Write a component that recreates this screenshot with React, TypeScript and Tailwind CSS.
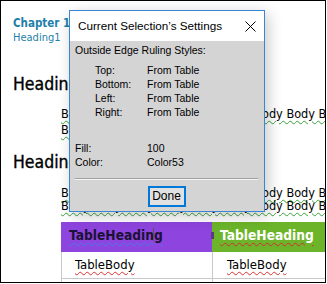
import React from "react";

const docFont = { fontFamily: '"DejaVu Sans Condensed", "DejaVu Sans", "Liberation Sans", sans-serif' };
const dlgFont = { fontFamily: '"Liberation Sans", Arial, sans-serif' };

const bodyLine =
  "Body Body Body Body Body Body Body Body Body Body Body Body";

export default function App() {
  return (
    <div
      className="relative w-[326px] h-[283px] border border-black bg-white overflow-hidden text-black"
      style={docFont}
    >
      {/* Document flow */}
      <div className="pl-[12px] pt-[15px]">
        <div className="text-[11.5px] leading-[15px] font-bold text-[#1f7fab] whitespace-nowrap">
          Chapter 1 Introduction
        </div>
        <div className="text-[11px] leading-[13px] text-[#1f7fab] whitespace-nowrap">Heading1</div>
        <div className="mt-[30px] text-[17.5px] leading-[20px] whitespace-nowrap [-webkit-text-stroke:0.35px_#000]">
          Heading 2
        </div>
      </div>

      <div className="pl-[60px] mt-[12px] text-[12.6px] leading-[16px] whitespace-nowrap">
        <div>
          <span className="underline decoration-wavy decoration-[#3aa03a] decoration-1 underline-offset-2">
            {bodyLine}
          </span>
        </div>
        <div>
          <span className="underline decoration-wavy decoration-[#3aa03a] decoration-1 underline-offset-2">
            Body Body Body
          </span>
        </div>
      </div>

      <div className="pl-[12px] mt-[14px] text-[17.5px] leading-[20px] whitespace-nowrap [-webkit-text-stroke:0.35px_#000]">
        Heading 2
      </div>

      <div className="pl-[60px] mt-[14px] text-[12.6px] leading-[13px] whitespace-nowrap">
        <div>
          <span className="underline decoration-wavy decoration-[#3aa03a] decoration-1 underline-offset-2">
            {bodyLine}
          </span>
        </div>
        <div>
          <span className="underline decoration-wavy decoration-[#3aa03a] decoration-1 underline-offset-2">
            {bodyLine}
          </span>
        </div>
      </div>

      {/* Table */}
      <div className="pl-[60px] mt-[10px]">
        <div className="grid grid-cols-[151px_151px] w-[302px]">
          <div className="relative h-[30px] bg-[#8e44de] pl-[8px] pt-[5px] text-[13.7px] leading-[16px] font-bold text-[#1c1236] whitespace-nowrap">
            <span className="underline decoration-wavy decoration-[#4a78e8] decoration-1 underline-offset-2">
              TableHeading
            </span>
            <span className="absolute left-[92px] top-[6px] w-[1px] h-[13px] bg-[#555]" />
            <span className="absolute right-[-2px] top-[10px] w-[3px] h-[7px] bg-[#5a3a80]" />
          </div>
          <div className="h-[30px] bg-[#6cb52a] pl-[8px] pt-[5px] text-[13.7px] leading-[16px] font-bold text-white whitespace-nowrap">
            <span className="underline decoration-wavy decoration-[#d03030] decoration-1 underline-offset-2">
              TableHeading
            </span>
          </div>
          <div className="h-[27px] border-l border-b border-[#c8c8c8] pl-[13px] pt-[5px] text-[13px] leading-[15px] whitespace-nowrap">
            <span className="underline decoration-wavy decoration-[#e03030] decoration-1 underline-offset-2">
              TableBody
            </span>
          </div>
          <div className="h-[27px] border-l border-b border-[#c8c8c8] pl-[14px] pt-[5px] text-[13px] leading-[15px] whitespace-nowrap">
            <span className="underline decoration-wavy decoration-[#e03030] decoration-1 underline-offset-2">
              TableBody
            </span>
          </div>
          <div className="h-[27px] border-l border-[#c8c8c8]" />
          <div className="h-[27px] border-l border-[#c8c8c8]" />
        </div>
      </div>

      {/* Dialog */}
      <div
        className="absolute left-[68px] top-[9px] w-[196px] h-[202px] border border-[#3a86d4] flex flex-col shadow-[3px_4px_14px_rgba(0,0,0,0.22)]"
        style={dlgFont}
      >
        <div className="h-[30px] bg-white flex items-center justify-between pl-[8px] pr-[8px]">
          <span className="text-[11.7px] leading-[14px] text-black whitespace-nowrap">
            Current Selection’s Settings
          </span>
          <svg width="11" height="11" viewBox="0 0 11 11" className="block">
            <path d="M0.5 0.5 L10.5 10.5 M10.5 0.5 L0.5 10.5" stroke="#000" strokeWidth="1" fill="none" />
          </svg>
        </div>
        <div className="flex-1 bg-[#d4d4d4] pl-[5px] pr-[6px] pt-[3px] text-[10.5px] text-black flex flex-col">
          <div className="leading-[13px] whitespace-nowrap">Outside Edge Ruling Styles:</div>
          <div className="mt-[7.4px] pl-[20px] grid grid-cols-[52px_1fr] leading-[13.7px] whitespace-nowrap">
            <span>Top:</span>
            <span>From Table</span>
            <span>Bottom:</span>
            <span>From Table</span>
            <span>Left:</span>
            <span>From Table</span>
            <span>Right:</span>
            <span>From Table</span>
          </div>
          <div className="mt-[23.2px] grid grid-cols-[72px_1fr] leading-[13.5px] whitespace-nowrap">
            <span>Fill:</span>
            <span>100</span>
            <span>Color:</span>
            <span>Color53</span>
          </div>
          <div className="mt-[8.6px] h-[1px] bg-[#a0a0a0]" />
          <div className="h-[1px] bg-[#f4f4f4]" />
          <div className="mt-[6px] self-center w-[38px] h-[21px] border-2 border-[#0078d7] bg-[#e1e1e1] flex items-center justify-center">
            <span className="text-[12px] leading-[14px] text-black">Done</span>
          </div>
        </div>
      </div>
    </div>
  );
}
